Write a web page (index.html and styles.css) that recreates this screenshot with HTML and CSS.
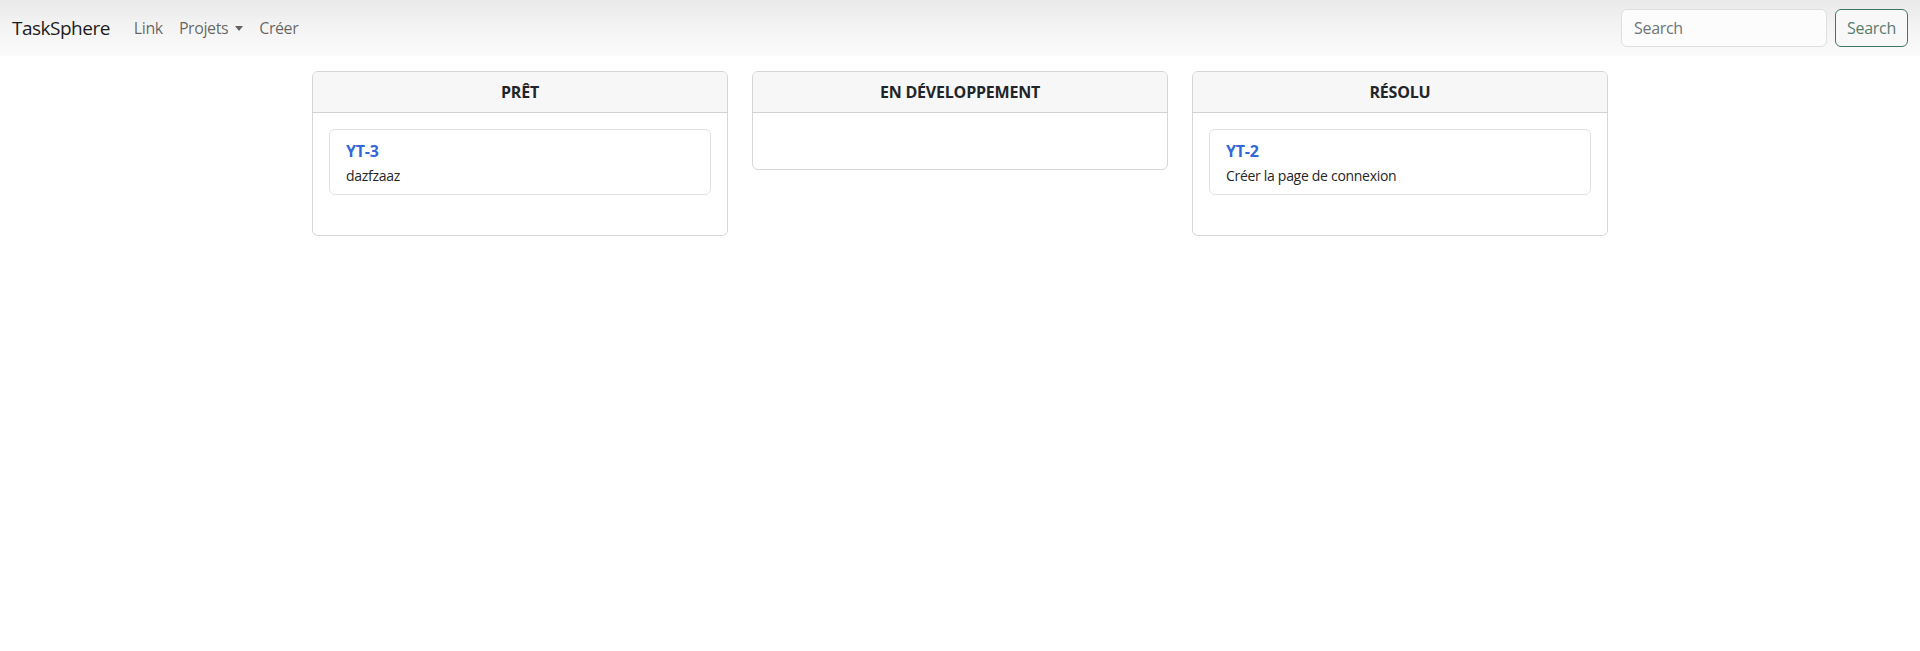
FILE: index.html
```html
<!DOCTYPE html>
<html lang="fr">
<head>
<meta charset="utf-8">
<title>TaskSphere</title>
<link rel="stylesheet" href="styles.css">
</head>
<body>
<nav class="navbar">
  <a class="brand" href="#">TaskSphere</a>
  <ul class="nav-links">
    <li><a class="nav-link" href="#">Link</a></li>
    <li><a class="nav-link dropdown" href="#">Projets<span class="caret"></span></a></li>
    <li><a class="nav-link" href="#">Créer</a></li>
  </ul>
  <form class="search">
    <input class="search-input" type="search" placeholder="Search">
    <button class="search-btn" type="button">Search</button>
  </form>
</nav>

<main class="board">
  <section class="column">
    <header class="column-header">PRÊT</header>
    <div class="column-body">
      <div class="task">
        <a class="task-key" href="#">YT-3</a>
        <p class="task-text">dazfzaaz</p>
      </div>
    </div>
  </section>
  <section class="column">
    <header class="column-header">EN DÉVELOPPEMENT</header>
    <div class="column-body"></div>
  </section>
  <section class="column">
    <header class="column-header">RÉSOLU</header>
    <div class="column-body">
      <div class="task">
        <a class="task-key" href="#">YT-2</a>
        <p class="task-text">Créer la page de connexion</p>
      </div>
    </div>
  </section>
</main>
</body>
</html>
```

FILE: styles.css
```css
* { box-sizing: border-box; }

body {
  margin: 0;
  background: #ffffff;
  color: #212529;
  font-family: "Open Sans", "Noto Sans", sans-serif;
  font-size: 16px;
  line-height: 1.5;
}

a { text-decoration: none; }

.navbar {
  display: flex;
  align-items: center;
  padding: 8px 12px;
  background: linear-gradient(#e9e9e9, #f3f3f3 45%, #fbfbfb);
}

.brand {
  color: #1c1c1c;
  font-size: 19px;
  line-height: 30px;
  padding: 5px 0;
  margin-right: 16px;
  letter-spacing: -0.5px;
}

.nav-links {
  display: flex;
  list-style: none;
  margin: 0;
  padding: 0;
  flex: 1;
}

.nav-link {
  display: flex;
  align-items: center;
  padding: 8px;
  color: rgba(0, 0, 0, 0.6);
  line-height: 24px;
  letter-spacing: -0.4px;
}

.caret {
  display: inline-block;
  margin-left: 7px;
  border-top: 5px solid rgba(0, 0, 0, 0.6);
  border-left: 4px solid transparent;
  border-right: 4px solid transparent;
}

.search {
  display: flex;
  gap: 8px;
}

.search-input {
  width: 206px;
  height: 38px;
  padding: 6px 12px;
  border: 1px solid #dcdfe2;
  border-radius: 6px;
  background: #fcfcfc;
  font: inherit;
  color: #212529;
  letter-spacing: -0.3px;
}

.search-input::placeholder { color: #6f7479; }

.search-btn {
  width: 73px;
  height: 38px;
  padding: 6px 0;
  border: 1px solid #3e7766;
  border-radius: 6px;
  background: #f7f8f7;
  font: inherit;
  color: #5b7d6f;
  letter-spacing: -0.3px;
}

.board {
  display: grid;
  grid-template-columns: repeat(3, 1fr);
  gap: 24px;
  align-items: start;
  max-width: 1320px;
  margin: 15px auto 0;
  padding: 0 12px;
}

.column {
  border: 1px solid #d6d6d6;
  border-radius: 6px;
  overflow: hidden;
}

.column-header {
  padding: 8px 16px;
  background: #f7f7f7;
  border-bottom: 1px solid #d2d2d2;
  text-align: center;
  font-weight: 700;
  line-height: 24px;
  letter-spacing: -0.2px;
}

.column-body {
  padding: 16px 16px 40px;
}

.task {
  border: 1px solid #e0e0e0;
  border-radius: 6px;
  padding: 12px 16px 8px;
}

.task-key {
  display: block;
  color: #3467d6;
  font-weight: 700;
  font-size: 16px;
  line-height: 19px;
  margin-bottom: 4px;
  letter-spacing: -0.2px;
}

.task-text {
  margin: 0;
  font-size: 14px;
  line-height: 21px;
  color: #262626;
  letter-spacing: -0.3px;
}
```
